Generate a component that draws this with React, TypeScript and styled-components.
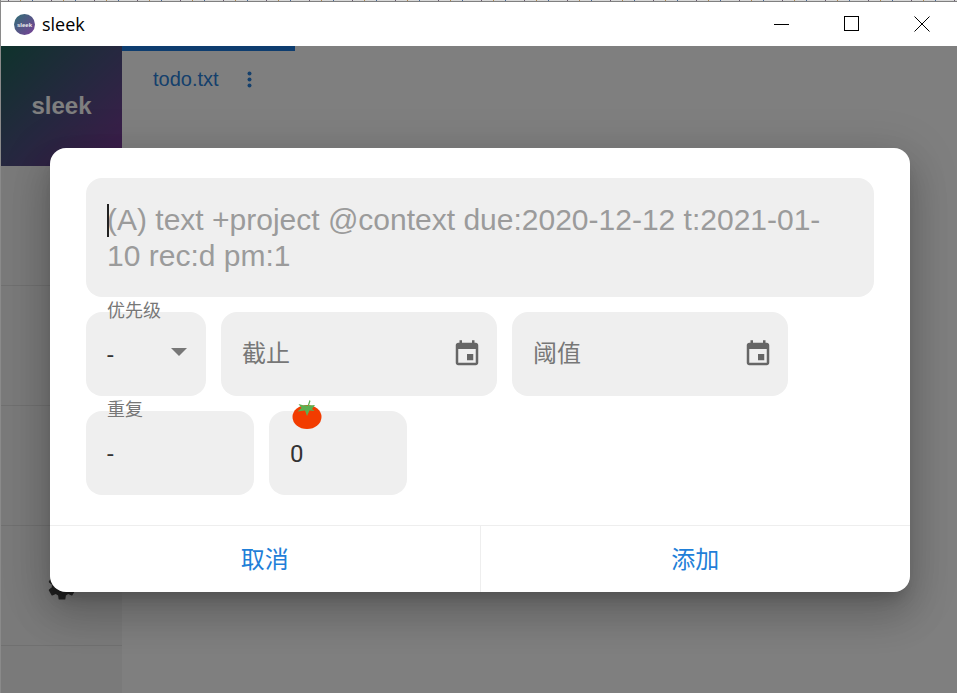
import React from "react";
import styled, { createGlobalStyle } from "styled-components";

const Global = createGlobalStyle`
  html, body { margin: 0; padding: 0; width: 957px; height: 693px; overflow: hidden; background: #fff; }
  * { box-sizing: border-box; }
`;
const cjk = `"Liberation Sans", "Noto Sans CJK SC", sans-serif`;

const Win = styled.div`
  position: relative; width: 957px; height: 693px; display: flex; flex-direction: column;
  overflow: hidden; border-left: 1px solid #8a8a8a;
  font-family: ${cjk};
`;
const DesktopPeek = styled.div`
  height: 1px; flex: none;
  background:
    repeating-linear-gradient(90deg, transparent 0 7px, #6a5a70 7px 8px, transparent 8px 19px, #b08a50 19px 20px, transparent 20px 31px, #4a6a98 31px 32px, transparent 32px 43px),
    #d8d8d8;
`;
const TitleBar = styled.div`
  height: 45px; flex: none; background: #fff; display: flex; align-items: center; padding-left: 13px;
  border-top: 1px solid #808080;
`;
const TitleText = styled.span`
  font: 18px "Open Sans", "Liberation Sans", sans-serif; color: #000; margin-left: 7px; flex: 1;
`;
const WinBtn = styled.div`
  width: 70px; height: 44px; display: flex; align-items: center; justify-content: center;
`;
const Body = styled.div`flex: 1; display: flex; min-height: 0; background: #fff;`;
const Side = styled.aside`width: 121px; flex: none; background: #f4f4f4; display: flex; flex-direction: column;`;
const Brand = styled.div`
  height: 120px; flex: none; display: flex; align-items: center; justify-content: center;
  background: linear-gradient(135deg, #1e6658 0%, #4c5080 50%, #80389a 100%);
  color: #fff; font: bold 24px "Liberation Sans", sans-serif;
`;
const SideCell = styled.div`
  height: 120px; flex: none; border-bottom: 1px solid #e0e0e0; display: flex; align-items: center; justify-content: center;
`;
const Main = styled.main`flex: 1; background: #fff;`;
const Tab = styled.div`
  width: 173px; height: 61px; border-top: 5px solid #1c7ade; display: flex; align-items: center; padding: 0 0 0 31px; gap: 28px;
  color: #2a80d8; font: 20px "Liberation Sans", sans-serif;
`;
const Backdrop = styled.div`
  position: absolute; inset: 46px 0 0 0; background: rgba(0,0,0,0.5);
`;
const Modal = styled.section`
  position: absolute; left: 49px; top: 148px; width: 860px; height: 444px; background: #fff; border-radius: 16px;
  box-shadow: 0 11px 15px -7px rgba(0,0,0,.2), 0 24px 38px 3px rgba(0,0,0,.14), 0 9px 46px 8px rgba(0,0,0,.12);
  display: flex; flex-direction: column;
`;
const Content = styled.div`flex: 1; padding: 30px 36px 0; display: flex; flex-direction: column;`;
const Editor = styled.div`
  height: 119px; background: #efefef; border-radius: 16px; padding: 24px 21px 0 21px; position: relative;
  font: 30px/35.5px "Liberation Sans", sans-serif; color: #9b9b9b;
`;
const Caret = styled.span`
  position: absolute; left: 21px; top: 26px; width: 2px; height: 33px; background: #222;
`;
const Row = styled.div`display: flex; gap: 15px; margin-top: 15px;`;
const Field = styled.div<{ $w: number }>`
  width: ${p => p.$w}px; height: 84px; background: #efefef; border-radius: 16px; position: relative;
  display: flex; align-items: center; justify-content: space-between; padding: 0 21px;
`;
const Label = styled.span`
  position: absolute; left: 21px; top: -12px; font: 18px/22px ${cjk}; color: #777;
`;
const Value = styled.span`font: 24px/28px "Roboto", ${cjk}; color: #333; margin-top: 2px;`;
const Hint = styled.span`font: 24px/28px ${cjk}; color: #777; margin-top: -1px;`;
const Tomato = styled.svg`position: absolute; left: 23px; top: -11px; width: 30px; height: 30px;`;
const Footer = styled.footer`display: flex; height: 67px; flex: none; border-top: 1px solid #eeeeee;`;
const Action = styled.div`
  flex: 1; display: flex; align-items: center; justify-content: center; padding-bottom: 4px;
  font: 24px ${cjk}; color: #1f7fd8;
  &:first-child { border-right: 1px solid #eeeeee; }
`;
const Calendar = styled.svg.attrs({ viewBox: "0 0 24 24", width: 30, height: 30 })`
  fill: #666; margin-right: -6px;
`;
const Caretdown = styled.svg.attrs({ viewBox: "0 0 16 8", width: 16, height: 8 })`
  margin-right: -2px; margin-top: -4px; fill: #777;
`;
const LogoText = styled.text`
  font: bold 6px "Liberation Sans", sans-serif; fill: #eee;
`;

const CalendarIcon = () => (
  <Calendar>
    <path d="M17 12h-5v5h5v-5zM16 1v2H8V1H6v2H5c-1.11 0-1.99.9-1.99 2L3 19c0 1.1.89 2 2 2h14c1.1 0 2-.9 2-2V5c0-1.1-.9-2-2-2h-1V1h-2zm3 18H5V8h14v11z" />
  </Calendar>
);

export default function App() {
  return (
    <>
      <Global />
      <Win>
        <DesktopPeek />
        <TitleBar>
          <svg width="21" height="21" viewBox="0 0 21 21">
            <defs>
              <linearGradient id="lg" x1="0" y1="0" x2="1" y2="1">
                <stop offset="0" stopColor="#2f6f74" />
                <stop offset="1" stopColor="#7a3f98" />
              </linearGradient>
            </defs>
            <circle cx="10.5" cy="10.5" r="10.5" fill="url(#lg)" />
            <LogoText x="10.5" y="12.5" textAnchor="middle">sleek</LogoText>
          </svg>
          <TitleText>sleek</TitleText>
          <WinBtn>
            <svg width="16" height="16" viewBox="0 0 16 16"><path d="M0 8.5h15" stroke="#000" fill="none" /></svg>
          </WinBtn>
          <WinBtn>
            <svg width="16" height="16" viewBox="0 0 16 16"><rect x=".5" y=".5" width="14" height="14" stroke="#000" fill="none" /></svg>
          </WinBtn>
          <WinBtn>
            <svg width="16" height="16" viewBox="0 0 16 16"><path d="M.5.5l15 15M15.5.5l-15 15" stroke="#000" fill="none" /></svg>
          </WinBtn>
        </TitleBar>
        <Body>
          <Side>
            <Brand>sleek</Brand>
            <SideCell />
            <SideCell />
            <SideCell />
            <SideCell>
              <svg width="34" height="34" viewBox="0 0 24 24" fill="#444">
                <path d="M19.14 12.94c.04-.3.06-.61.06-.94s-.02-.64-.07-.94l2.03-1.58a.5.5 0 0 0 .12-.61l-1.92-3.32a.5.5 0 0 0-.59-.22l-2.39.96a7 7 0 0 0-1.62-.94l-.36-2.54a.5.5 0 0 0-.48-.41h-3.84a.5.5 0 0 0-.47.41l-.36 2.54c-.59.24-1.13.57-1.62.94l-2.39-.96a.5.5 0 0 0-.59.22L2.74 8.87a.5.5 0 0 0 .12.61l2.03 1.58c-.05.3-.09.63-.09.94s.02.64.07.94l-2.03 1.58a.5.5 0 0 0-.12.61l1.92 3.32c.12.22.37.29.59.22l2.39-.96c.5.38 1.03.7 1.62.94l.36 2.54c.05.24.24.41.48.41h3.84c.24 0 .44-.17.47-.41l.36-2.54c.59-.24 1.13-.56 1.62-.94l2.39.96c.22.08.47 0 .59-.22l1.92-3.32a.5.5 0 0 0-.12-.61l-2.01-1.58zM12 15.6A3.6 3.6 0 1 1 12 8.4a3.6 3.6 0 0 1 0 7.2z" />
              </svg>
            </SideCell>
          </Side>
          <Main>
            <Tab>
              <span>todo.txt</span>
              <svg width="5" height="17" viewBox="0 0 5 17" fill="#2a80d8">
                <circle cx="2.5" cy="2.5" r="2" /><circle cx="2.5" cy="8.5" r="2" /><circle cx="2.5" cy="14.5" r="2" />
              </svg>
            </Tab>
          </Main>
        </Body>
        <Backdrop />
        <Modal>
          <Content>
            <Editor>
              <Caret />
              (A) text +project @context due:2020-12-12 t:2021-01-10 rec:d pm:1
            </Editor>
            <Row>
              <Field $w={120}>
                <Label>优先级</Label>
                <Value>-</Value>
                <Caretdown><path d="M0 0h16L8 8z" /></Caretdown>
              </Field>
              <Field $w={276}><Hint>截止</Hint><CalendarIcon /></Field>
              <Field $w={276}><Hint>阈值</Hint><CalendarIcon /></Field>
            </Row>
            <Row>
              <Field $w={168}>
                <Label>重复</Label>
                <Value>-</Value>
              </Field>
              <Field $w={138}>
                <Tomato viewBox="0 0 30 30">
                  <ellipse cx="15" cy="17" rx="14.5" ry="12" fill="#f23c00" />
                  <path d="M17.5 0l1 1-1.5 4.5 6 -.5-3 4 2.5 2-5-.5L15 16l-2-5.5-7.5 1 4-3.5-3-4 5.5 1.5 2 -.5 1.5 1z" fill="#5cb050" />
                </Tomato>
                <Value>0</Value>
              </Field>
            </Row>
          </Content>
          <Footer>
            <Action>取消</Action>
            <Action>添加</Action>
          </Footer>
        </Modal>
      </Win>
    </>
  );
}
